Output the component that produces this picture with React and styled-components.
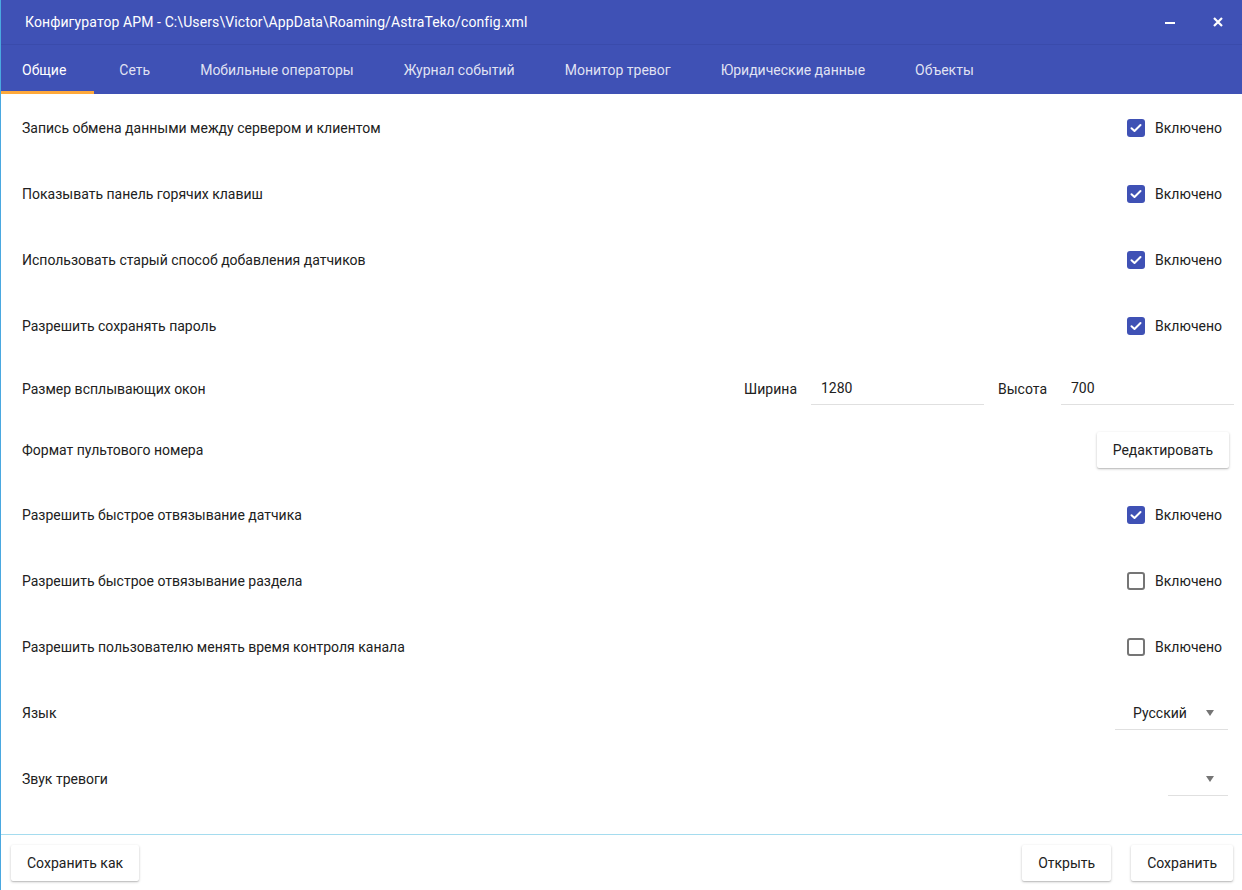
import React from 'react'
import styled, { createGlobalStyle } from 'styled-components'

const GlobalStyle = createGlobalStyle`
  html, body {
    margin: 0;
    padding: 0;
    background: #ffffff;
  }
  body {
    font-family: Roboto, "Liberation Sans", sans-serif;
    font-size: 14px;
    color: #212121;
  }
  * { box-sizing: border-box; }
`

const primary = '#3f51b5'

const Window = styled.div`
  width: 1242px;
  height: 890px;
  display: flex;
  flex-direction: column;
  border-left: 1px solid #4aa8e0;
  background: #fff;
  overflow: hidden;
`

const TitleBar = styled.div`
  height: 45px;
  flex-shrink: 0;
  background: ${primary};
  border-bottom: 1px solid #3a4bab;
  display: flex;
  align-items: center;
  padding-left: 24px;
  padding-right: 0;
  color: #fff;
`

const Title = styled.div`
  flex: 1;
  font-size: 14px;
  letter-spacing: 0.1px;
`

const WinButton = styled.div`
  width: 48px;
  height: 44px;
  display: flex;
  align-items: center;
  justify-content: center;
`

const TabBar = styled.div`
  height: 49px;
  flex-shrink: 0;
  background: ${primary};
  display: flex;
  align-items: stretch;
`

const Tab = styled.div`
  position: relative;
  display: flex;
  align-items: center;
  padding: ${p => (p.$first ? '0 28px 0 21px' : '0 25px')};
  color: ${p => (p.$active ? '#fff' : 'rgba(255,255,255,0.85)')};
  font-size: 14px;
  white-space: nowrap;
  &::after {
    content: '';
    display: ${p => (p.$active ? 'block' : 'none')};
    position: absolute;
    left: 0;
    right: 0;
    bottom: 0;
    height: 3px;
    background: #ffa93a;
  }
`

const Content = styled.div`
  flex: 1;
  display: flex;
  flex-direction: column;
  padding-top: 1px;
`

const Row = styled.div`
  height: ${p => p.$h || 66}px;
  display: flex;
  align-items: center;
  padding: 0 ${p => p.$pr || 20}px 0 21px;
`

const Label = styled.div`
  flex: 1;
  font-size: 14px;
`

const CheckWrap = styled.label`
  display: flex;
  align-items: center;
  gap: 10px;
  font-size: 14px;
`

const Box = styled.span`
  width: 18px;
  height: 18px;
  border-radius: 3px;
  display: flex;
  align-items: center;
  justify-content: center;
  margin-left: 1px;
  background: ${p => (p.$checked ? primary : '#fff')};
  border: ${p => (p.$checked ? 'none' : '2px solid #757575')};
`

const FieldLabel = styled.div`
  font-size: 14px;
  margin-right: 14px;
`

const TextInput = styled.div`
  width: 173px;
  height: 33px;
  display: flex;
  align-items: center;
  padding: 0 10px;
  border-bottom: 1px solid #e0e0e0;
  margin-right: ${p => p.$mr || 0}px;
  font-size: 14px;
`

const Button = styled.button`
  font-family: inherit;
  font-size: 14px;
  color: #212121;
  background: #fff;
  border: none;
  border-radius: 2px;
  height: 36px;
  padding: 0 16px;
  box-shadow: 0 1px 3px rgba(0,0,0,0.2), 0 1px 1px rgba(0,0,0,0.12);
  cursor: pointer;
`

const Select = styled.div`
  width: ${p => p.$w}px;
  height: 34px;
  display: flex;
  align-items: center;
  justify-content: flex-end;
  border-bottom: 1px solid #e0e0e0;
  margin-right: -6px;
  padding-right: 14px;
`

const SelectText = styled.span`
  flex: 1;
  padding-left: 18px;
  font-size: 14px;
`

const Arrow = styled.span`
  width: 0;
  height: 0;
  border-left: 4px solid transparent;
  border-right: 4px solid transparent;
  border-top: 6px solid #757575;
`

const Footer = styled.div`
  height: 56px;
  flex-shrink: 0;
  border-top: 1px solid #a5dcef;
  display: flex;
  align-items: center;
  padding: 0 9px 0 10px;
  gap: 20px;
`

const Spacer = styled.div`
  flex: 1;
`

const Check = ({ checked }) => (
  <CheckWrap>
    <Box $checked={checked}>
      {checked && (
        <svg width="12" height="10" viewBox="0 0 12 10">
          <path d="M1.5 5.2 L4.5 8 L10.5 2" stroke="#fff" strokeWidth="2" fill="none" strokeLinecap="round" strokeLinejoin="round" />
        </svg>
      )}
    </Box>
    Включено
  </CheckWrap>
)

const tabs = ['Общие', 'Сеть', 'Мобильные операторы', 'Журнал событий', 'Монитор тревог', 'Юридические данные', 'Объекты']

const App = () => {
  return (
    <>
      <GlobalStyle />
      <Window>
        <TitleBar>
          <Title>Конфигуратор АРМ - C:\Users\Victor\AppData\Roaming/AstraTeko/config.xml</Title>
          <WinButton>
            <svg width="12" height="12" viewBox="0 0 12 12">
              <rect x="1" y="6" width="10" height="2" fill="#fff" />
            </svg>
          </WinButton>
          <WinButton>
            <svg width="12" height="12" viewBox="0 0 12 12">
              <path d="M2 2 L10 10 M10 2 L2 10" stroke="#fff" strokeWidth="2.2" />
            </svg>
          </WinButton>
        </TitleBar>
        <TabBar>
          {tabs.map((t, i) => (
            <Tab key={t} $active={i === 0} $first={i === 0}>{t}</Tab>
          ))}
        </TabBar>
        <Content>
          <Row>
            <Label>Запись обмена данными между сервером и клиентом</Label>
            <Check checked />
          </Row>
          <Row>
            <Label>Показывать панель горячих клавиш</Label>
            <Check checked />
          </Row>
          <Row>
            <Label>Использовать старый способ добавления датчиков</Label>
            <Check checked />
          </Row>
          <Row>
            <Label>Разрешить сохранять пароль</Label>
            <Check checked />
          </Row>
          <Row $h={59} $pr={8}>
            <Label>Размер всплывающих окон</Label>
            <FieldLabel>Ширина</FieldLabel>
            <TextInput $mr={14}>1280</TextInput>
            <FieldLabel>Высота</FieldLabel>
            <TextInput>700</TextInput>
          </Row>
          <Row $h={64} $pr={13}>
            <Label>Формат пультового номера</Label>
            <Button>Редактировать</Button>
          </Row>
          <Row>
            <Label>Разрешить быстрое отвязывание датчика</Label>
            <Check checked />
          </Row>
          <Row>
            <Label>Разрешить быстрое отвязывание раздела</Label>
            <Check />
          </Row>
          <Row>
            <Label>Разрешить пользователю менять время контроля канала</Label>
            <Check />
          </Row>
          <Row>
            <Label>Язык</Label>
            <Select $w={113}>
              <SelectText>Русский</SelectText>
              <Arrow />
            </Select>
          </Row>
          <Row>
            <Label>Звук тревоги</Label>
            <Select $w={60}>
              <Arrow />
            </Select>
          </Row>
        </Content>
        <Footer>
          <Button>Сохранить как</Button>
          <Spacer />
          <Button>Открыть</Button>
          <Button>Сохранить</Button>
        </Footer>
      </Window>
    </>
  )
}

export default App
